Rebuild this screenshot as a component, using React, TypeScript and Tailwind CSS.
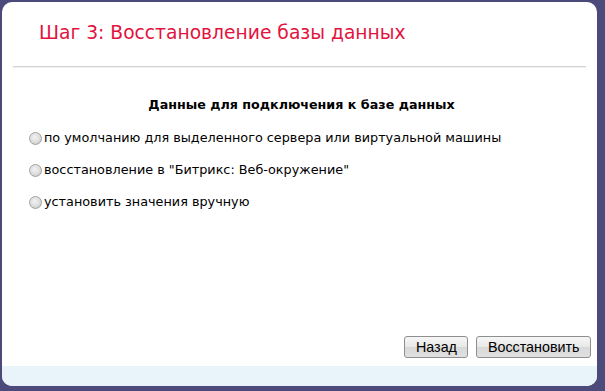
import React from "react";

const options = [
  "по умолчанию для выделенного сервера или виртуальной машины",
  'восстановление в "Битрикс: Веб-окружение"',
  "установить значения вручную",
];

function Radio() {
  return (
    <span className="inline-block h-[13px] w-[13px] flex-none rounded-full border border-[#a3a3a3] bg-[radial-gradient(circle_at_45%_40%,#f4f4f4_0%,#dcdcdc_55%,#b8b8b8_100%)]" />
  );
}

function Btn({ children }: { children: React.ReactNode }) {
  return (
    <button className="h-[22px] rounded-[3px] border border-[#8e8f8f] bg-[linear-gradient(#f6f6f6,#e8e8e8_50%,#d9d9d9_51%,#e0e0e0)] px-[10.5px] text-[14.3px] leading-none text-black [font-family:'Liberation_Sans',Arial,sans-serif]">
      {children}
    </button>
  );
}

export default function App() {
  return (
    <div className="h-[391px] w-[605px] bg-[#4b4a7a] pb-[5px] pl-[2px] pr-[8px] pt-[2px]">
      <div className="flex h-full w-full flex-col overflow-hidden rounded-[10px] bg-white">
        <div className="px-[37px] pt-[19px] text-[18.7px] leading-[24px] text-[#e3123e] [font-family:'DejaVu_Sans',Verdana,sans-serif]">
          Шаг 3: Восстановление базы данных
        </div>
        <div className="mx-[11px] mt-[21px] h-[2px] border-t border-[#d3d3d3] bg-[#f0f0f0]" />
        <div className="flex flex-col [font-family:'DejaVu_Sans',Verdana,sans-serif]">
          <div className="mt-[29px] pl-[4px] text-center text-[12.7px] font-bold leading-[16px] text-black">
            Данные для подключения к базе данных
          </div>
          <div className="mt-[17px] flex flex-col gap-[16px] pl-[27px]">
            {options.map((o) => (
              <label key={o} className="flex items-center gap-[2px] text-[12.8px] leading-[16px] text-black">
                <Radio />
                {o}
              </label>
            ))}
          </div>
        </div>
        <div className="flex-1" />
        <div className="flex justify-end gap-[8px] pr-[6px]">
          <Btn>Назад</Btn>
          <Btn>Восстановить</Btn>
        </div>
        <div className="mt-[8px] h-[20px] bg-[#e9f3fa]" />
      </div>
    </div>
  );
}
